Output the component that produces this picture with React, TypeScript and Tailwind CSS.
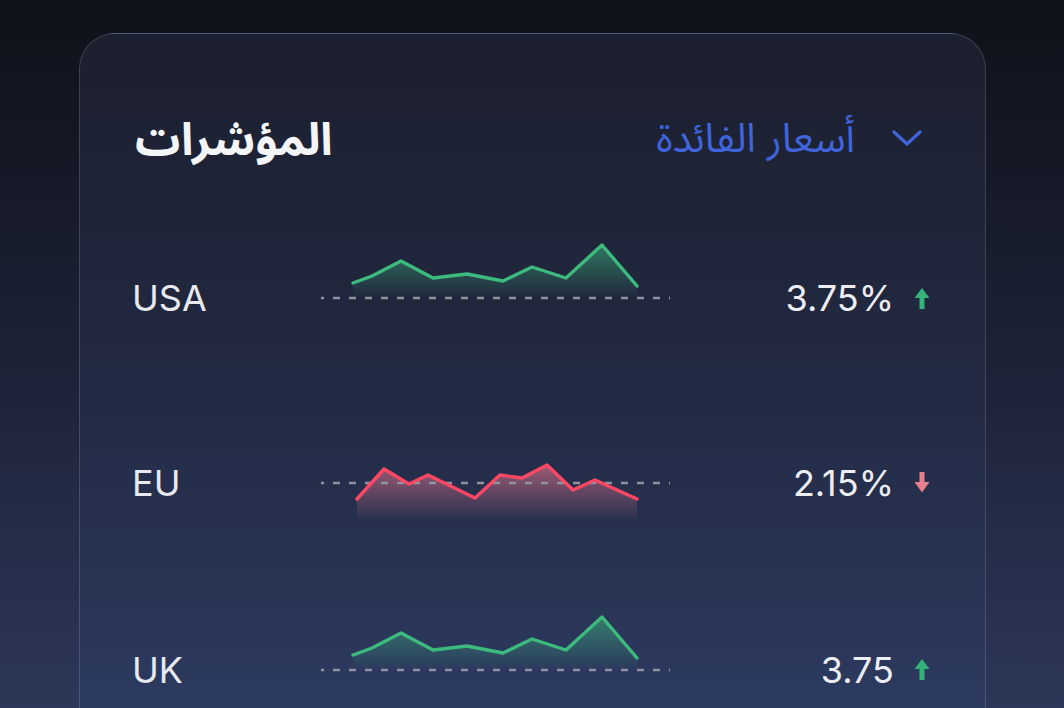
import React from 'react';

type Pt = [number, number];

interface Rate {
  code: string;
  value: string;
  up: boolean;
  points: Pt[];
}

// sparkline drawn in a 350x120 box, baseline (dashed) at y=60
const usPoints: Pt[] = [
  [33, 45], [52, 38], [81, 23], [113, 40], [147, 36], [183, 43], [212, 29], [246, 40], [282, 7], [317, 48],
];

const euPoints: Pt[] = [
  [37, 76], [64, 46], [89, 61], [108, 52], [155, 75], [180, 52], [202, 55], [227, 42], [253, 67], [275, 57], [317, 76],
];

const rates: Rate[] = [
  { code: 'USA', value: '3.75%', up: true, points: usPoints },
  { code: 'EU', value: '2.15%', up: false, points: euPoints },
  { code: 'UK', value: '3.75', up: true, points: usPoints },
];

const font = { fontFamily: 'Inter, "Noto Sans Arabic", "DejaVu Sans", sans-serif' };

function Sparkline({ points, up, id }: { points: Pt[]; up: boolean; id: string }) {
  const color = up ? '#3dba7d' : '#ff4763';
  const fillColor = up ? '#3dba7d' : '#ff7f98';
  const line = points.map(([x, y]) => `${x},${y}`).join(' ');
  const bottom = up ? 60 : 98;
  const first = points[0];
  const last = points[points.length - 1];
  const area = `M${first[0]},${bottom} L${line.split(' ').join(' L')} L${last[0]},${bottom} Z`;

  return (
    <svg width="350" height="120" viewBox="0 0 350 120" className="shrink-0">
      <defs>
        <linearGradient id={id} x1="0" y1="0" x2="0" y2="1" gradientUnits="objectBoundingBox">
          <stop offset="0" stopColor={fillColor} stopOpacity="0.55" />
          <stop offset="1" stopColor={fillColor} stopOpacity="0" />
        </linearGradient>
      </defs>
      <path d={area} fill={`url(#${id})`} />
      <line
        x1="1"
        y1="60"
        x2="350"
        y2="60"
        stroke="#8e93a1"
        strokeWidth="2.5"
        strokeDasharray="7 9"
        strokeDashoffset="4"
      />
      <polyline points={line} fill="none" stroke={color} strokeWidth="3.4" strokeLinejoin="round" strokeLinecap="round" />
    </svg>
  );
}

function Arrow({ up }: { up: boolean }) {
  return (
    <svg width="16" height="21" viewBox="0 0 16 21" className="shrink-0">
      {up ? (
        <polygon points="8,0 15.5,10 10.5,10 10.5,21 5.5,21 5.5,10 0.5,10" fill="#34b27a" />
      ) : (
        <polygon points="5.5,0 10.5,0 10.5,10 15.5,10 8,20.5 0.5,10 5.5,10" fill="#e6808f" />
      )}
    </svg>
  );
}

export default function App() {
  return (
    <div
      className="h-[708px] w-full overflow-hidden bg-gradient-to-b from-[#0f121a] via-[#1c2236] to-[#2d3759]"
      style={font}
    >
      <div className="ml-[79px] mt-[33px] w-[907px] rounded-[36px] border border-white/15 bg-gradient-to-b from-[#1b1f2e] via-[#232b45] to-[#30406a] px-[55px] pt-[74px] pb-10">
        <div className="flex h-[60px] items-center justify-between pr-2">
          <span dir="rtl" className="text-[45px] font-bold leading-none text-[#f4f5f8]">
            المؤشرات
          </span>
          <button className="flex items-center gap-[37px] text-[#3f64dc]">
            <span dir="rtl" className="text-[40px] leading-none">
              أسعار الفائدة
            </span>
            <svg width="30" height="18" viewBox="0 0 30 18">
              <polyline points="2,3 15,15 28,3" fill="none" stroke="#3f64dc" strokeWidth="3.2" strokeLinecap="round" strokeLinejoin="round" />
            </svg>
          </button>
        </div>

        <div className="mt-[39px] flex flex-col">
          {rates.map((r, i) => (
            <div key={r.code} className={`flex items-center ${i === 0 ? 'h-[182px]' : 'h-[187px]'}`}>
              <span className="-ml-[3px] w-[188px] shrink-0 text-[36px] text-[#e7e9ef]">{r.code}</span>
              <Sparkline points={r.points} up={r.up} id={`fill-${i}`} />
              <div className="flex flex-1 items-center justify-end gap-5">
                <span className="text-[36px] text-[#eceef3]">{r.value}</span>
                <Arrow up={r.up} />
              </div>
            </div>
          ))}
        </div>
      </div>
    </div>
  );
}
